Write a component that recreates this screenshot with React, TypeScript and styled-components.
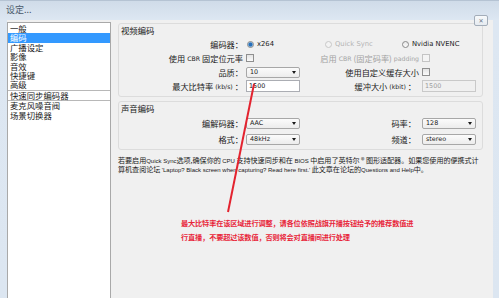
import styled, { createGlobalStyle } from "styled-components";

const GlobalStyle = createGlobalStyle`
    html, body {
        margin: 0;
        padding: 0;
        width: 499px;
        height: 298px;
        overflow: hidden;
        font-family: "Noto Sans CJK SC", "DejaVu Sans", sans-serif;
    }
`;

const Window = styled.div`
    position: relative;
    display: flex;
    flex-direction: column;
    width: 499px;
    height: 298px;
    background: linear-gradient(to bottom, #cfdbe8 0px, #dde7f2 20px, #dce6f1 100%);
    overflow: hidden;
`;

const TitleBar = styled.div`
    display: flex;
    align-items: flex-start;
    justify-content: space-between;
    height: 20px;
    padding: 0 11px 0 6px;
    border-top: 1px solid #b5c3d3;
    box-sizing: border-box;
`;

const Title = styled.span`
    font-size: 9px;
    line-height: 18px;
    color: #4b5a6b;
`;

const CloseButton = styled.div`
    position: relative;
    z-index: 1;
    width: 12px;
    height: 9px;
    margin-top: 14px;
    border: 1px solid #a3adb9;
    border-radius: 2px;
    background: linear-gradient(#f7f9fb, #e6ebf0);
    display: flex;
    align-items: center;
    justify-content: center;
    font-size: 6px;
    line-height: 1;
    color: #6b7786;
`;

const Body = styled.div`
    flex: 1;
    display: flex;
    margin: 0 6px 0 7px;
    background: #f0f0f0;
    padding-top: 2px;
    min-height: 0;
`;

const Sidebar = styled.ul`
    flex: 0 0 104px;
    list-style: none;
    margin: 0;
    padding: 1px 0 0 0;
    box-sizing: border-box;
    background: #fff;
    border: 1px solid #a9a9a9;
    border-bottom: none;
`;

const NavItem = styled.li<{ $active?: boolean; $divider?: boolean }>`
    height: 9.4px;
    line-height: 9.4px;
    padding-left: 2px;
    font-size: 8.4px;
    color: ${(p) => (p.$active ? "#fff" : "#1a1a1a")};
    background: ${(p) => (p.$active ? "#3399ff" : "transparent")};
    border-top: ${(p) => (p.$divider ? "1px solid #b8b8b8" : "none")};
    white-space: nowrap;
`;

const Main = styled.div`
    flex: 1;
    min-width: 0;
    position: relative;
    padding: 1px 10px 0 7px;
    display: flex;
    flex-direction: column;
`;

const Group = styled.fieldset<{ $top?: number }>`
    margin: ${(p) => p.$top ?? 0}px 0 0 0;
    padding: 0 0 4px 0;
    border: 1px solid #dcdcdc;
    border-radius: 3px;
    min-width: 0;
`;

const GroupTitle = styled.div`
    font-size: 8.4px;
    color: #1a1a1a;
    padding: 1px 0 0 2px;
    height: 10px;
    line-height: 10px;
`;

const FormGrid = styled.div<{ $rowGap: number; $top: number }>`
    display: grid;
    grid-template-columns: 124px 54px 1fr 54px;
    column-gap: 3px;
    row-gap: ${(p) => p.$rowGap}px;
    align-items: center;
    margin-top: ${(p) => p.$top}px;
    padding-right: 6px;
`;

const Label = styled.div<{ $muted?: boolean; $inset?: number }>`
    text-align: right;
    font-size: 8.2px;
    white-space: nowrap;
    color: ${(p) => (p.$muted ? "#a3a3a3" : "#1a1a1a")};
    display: flex;
    justify-content: flex-end;
    align-items: center;
    gap: 2px;
    height: 12px;
    padding-right: ${(p) => p.$inset ?? 0}px;
`;

const Small = styled.span`
    font-family: "DejaVu Sans", sans-serif;
    font-size: 6.2px;
`;

const RadioRow = styled.div`
    grid-column: 2 / 5;
    display: flex;
    align-items: center;
    height: 12px;
    padding-left: 1px;
`;

const RadioOption = styled.label<{ $width: number; $muted?: boolean }>`
    display: flex;
    align-items: center;
    gap: 3px;
    width: ${(p) => p.$width}px;
    font-family: "DejaVu Sans", sans-serif;
    font-size: 6.8px;
    color: ${(p) => (p.$muted ? "#b4b4b4" : "#1a1a1a")};
    white-space: nowrap;
`;

const RadioDot = styled.span<{ $checked?: boolean; $muted?: boolean }>`
    width: 7px;
    height: 7px;
    border-radius: 50%;
    box-sizing: border-box;
    border: 1px solid ${(p) => (p.$muted ? "#c8c8c8" : "#8a8a8a")};
    background: ${(p) =>
        p.$checked
            ? "radial-gradient(circle, #2a6fb8 0 1.6px, #7fb6e6 2.2px, #eef4fa 3px)"
            : p.$muted
            ? "#f3f3f3"
            : "linear-gradient(#e9e9e9, #fafafa)"};
`;

const Check = styled.span<{ $muted?: boolean }>`
    display: inline-block;
    width: 8px;
    height: 8px;
    box-sizing: border-box;
    border: 1px solid ${(p) => (p.$muted ? "#c4c4c4" : "#8f8f8f")};
    background: ${(p) => (p.$muted ? "#f4f4f4" : "linear-gradient(#e3e3e3, #fafafa)")};
`;

const CheckCell = styled.div`
    display: flex;
    align-items: center;
    height: 12px;
`;

const Select = styled.div`
    display: flex;
    align-items: center;
    justify-content: space-between;
    height: 11px;
    box-sizing: border-box;
    padding: 0 3px 0 3px;
    border: 1px solid #a7a7a7;
    border-radius: 2px;
    background: linear-gradient(#fbfbfb, #ececec);
    font-family: "DejaVu Sans", sans-serif;
    font-size: 6.4px;
    color: #1a1a1a;
    &::after {
        content: "";
        border-left: 2.5px solid transparent;
        border-right: 2.5px solid transparent;
        border-top: 3px solid #1a1a1a;
    }
`;

const Input = styled.div<{ $disabled?: boolean }>`
    height: 12px;
    box-sizing: border-box;
    padding-left: 2px;
    display: flex;
    align-items: center;
    border: 1px solid ${(p) => (p.$disabled ? "#c9c9c9" : "#abadb3")};
    background: ${(p) => (p.$disabled ? "#f0f0f0" : "#fff")};
    color: ${(p) => (p.$disabled ? "#9c9c9c" : "#1a1a1a")};
    font-family: "DejaVu Sans", sans-serif;
    font-size: 6.4px;
`;

const Note = styled.p`
    margin: 6px 0 0 0;
    font-size: 7.1px;
    line-height: 8px;
    color: #1a1a1a;
    white-space: nowrap;
    letter-spacing: -0.05px;
`;

const Latin = styled.span`
    font-family: "Liberation Sans", sans-serif;
    font-size: 6px;
    letter-spacing: 0;
`;

const Annotation = styled.p`
    margin: 42px 0 0 63px;
    font-size: 7.2px;
    line-height: 14px;
    font-weight: bold;
    color: #e8263a;
    white-space: nowrap;
    letter-spacing: -0.15px;
`;

const Pointer = styled.svg`
    position: absolute;
    left: 0;
    top: 0;
    pointer-events: none;
`;

export default function App() {
    return (
        <Window>
            <GlobalStyle />
            <TitleBar>
                <Title>设定...</Title>
                <CloseButton>✕</CloseButton>
            </TitleBar>
            <Body>
                <Sidebar>
                    <NavItem>一般</NavItem>
                    <NavItem $active>编码</NavItem>
                    <NavItem>广播设定</NavItem>
                    <NavItem>影像</NavItem>
                    <NavItem>音效</NavItem>
                    <NavItem>快捷键</NavItem>
                    <NavItem>高级</NavItem>
                    <NavItem $divider>快速同步编码器</NavItem>
                    <NavItem $divider>麦克风噪音阀</NavItem>
                    <NavItem>场景切换器</NavItem>
                </Sidebar>
                <Main>
                    <Group>
                        <GroupTitle>视频编码</GroupTitle>
                        <FormGrid $rowGap={2} $top={3}>
                            <Label>编码器：</Label>
                            <RadioRow>
                                <RadioOption $width={78}>
                                    <RadioDot $checked />
                                    x264
                                </RadioOption>
                                <RadioOption $width={77} $muted>
                                    <RadioDot $muted />
                                    Quick Sync
                                </RadioOption>
                                <RadioOption $width={60}>
                                    <RadioDot />
                                    Nvidia NVENC
                                </RadioOption>
                            </RadioRow>

                            <Label>
                                使用 <Small>CBR</Small> 固定位元率
                            </Label>
                            <CheckCell>
                                <Check />
                            </CheckCell>
                            <Label $muted>
                                启用<Small>CBR</Small>(固定码率)<Small>padding</Small>
                            </Label>
                            <CheckCell>
                                <Check $muted />
                            </CheckCell>

                            <Label>品质：</Label>
                            <Select>10</Select>
                            <Label>使用自定义缓存大小</Label>
                            <CheckCell>
                                <Check />
                            </CheckCell>

                            <Label>
                                最大比特率 <Small>(kb/s)</Small>：
                            </Label>
                            <Input>1500</Input>
                            <Label $inset={3}>
                                缓冲大小 <Small>(kbit)</Small>：
                            </Label>
                            <Input $disabled>1500</Input>
                        </FormGrid>
                    </Group>
                    <Group $top={4}>
                        <GroupTitle>声音编码</GroupTitle>
                        <FormGrid $rowGap={4} $top={4}>
                            <Label>编解码器：</Label>
                            <Select>AAC</Select>
                            <Label $inset={3}>码率：</Label>
                            <Select>128</Select>

                            <Label>格式：</Label>
                            <Select>48kHz</Select>
                            <Label $inset={3}>频道：</Label>
                            <Select>stereo</Select>
                        </FormGrid>
                    </Group>
                    <Note>
                        若要启用<Latin>Quick Sync</Latin>选项,确保你的 <Latin>CPU</Latin> 支持快速同步和在 <Latin>BIOS</Latin> 中启用了英特尔 ® 图形适配器。如果您使用的便携式计
                        <br />
                        算机查阅论坛 <Latin>'Laptop? Black screen when capturing? Read here first.'</Latin> 此文章在论坛的<Latin>Questions and Help</Latin>中。
                    </Note>
                    <Annotation>
                        最大比特率在该区域进行调整，请各位依照战旗开播按钮给予的推荐数值进
                        <br />
                        行直播，不要超过该数值，否则将会对直播间进行处理
                    </Annotation>
                    <Pointer width="380" height="276">
                        <line x1="143" y1="62" x2="117" y2="190" stroke="#e3232f" strokeWidth="2" />
                    </Pointer>
                </Main>
            </Body>
        </Window>
    );
}
